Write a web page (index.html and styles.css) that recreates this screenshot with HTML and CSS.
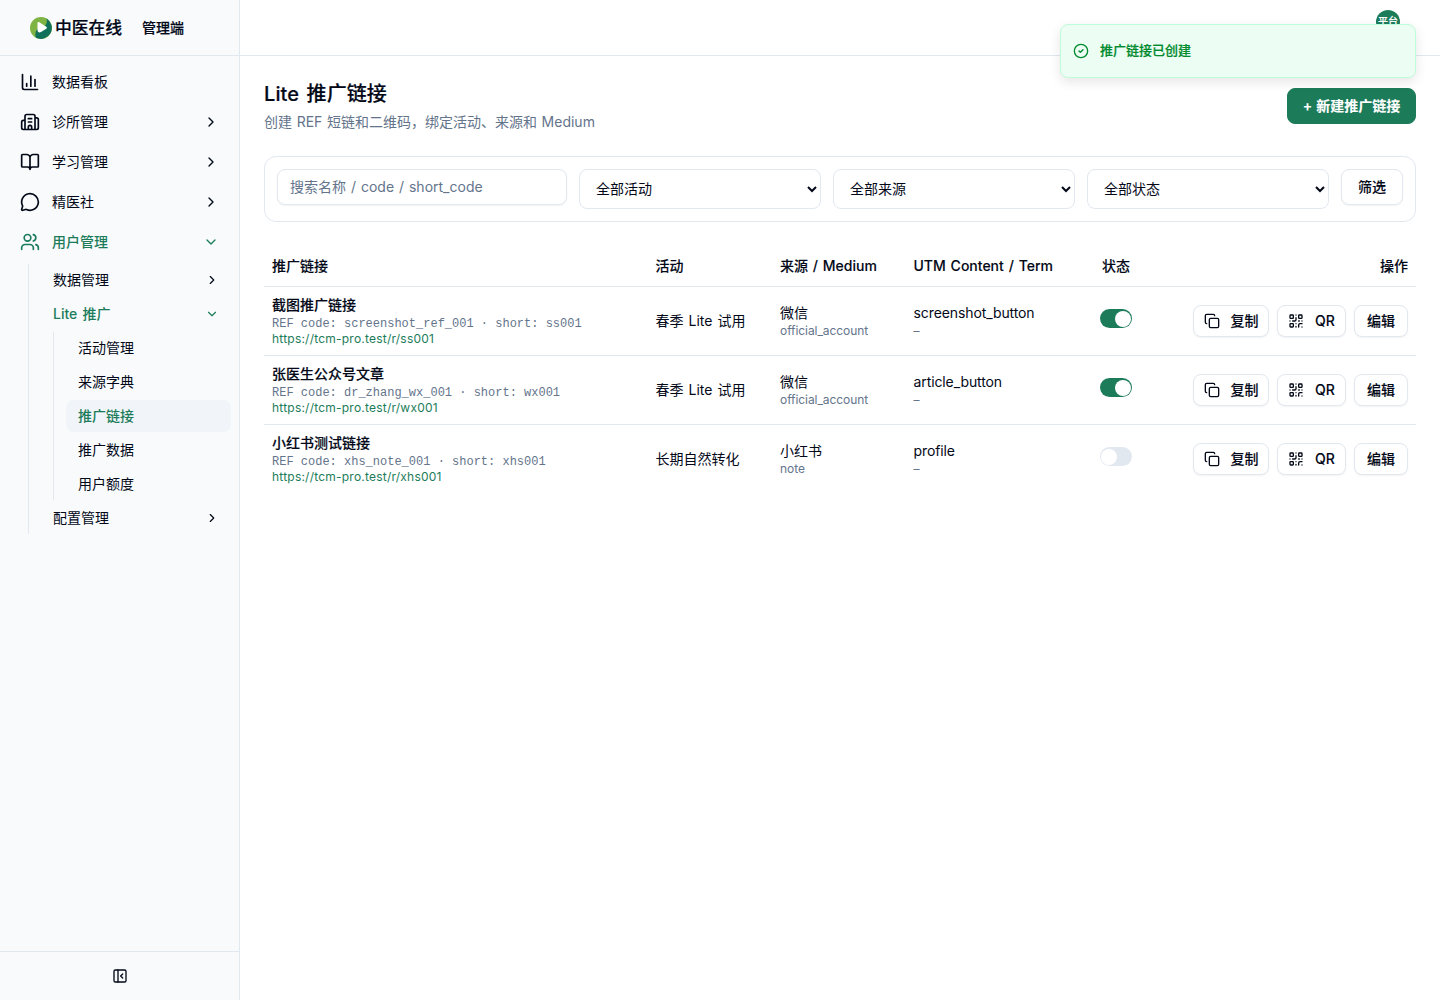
FILE: index.html
```html
<!DOCTYPE html>
<html lang="zh-CN">
<head>
<meta charset="utf-8">
<title>Lite 推广链接</title>
<link rel="stylesheet" href="styles.css">
</head>
<body>
<svg class="sprite" aria-hidden="true">
  <symbol id="chart" viewBox="0 0 24 24"><path d="M3 3v16a2 2 0 0 0 2 2h16M18 17V9M13 17V5M8 17v-3"/></symbol>
  <symbol id="building" viewBox="0 0 24 24"><path d="M10 12h4M10 8h4M14 21v-3a2 2 0 0 0-4 0v3M6 10H4a2 2 0 0 0-2 2v7a2 2 0 0 0 2 2h16a2 2 0 0 0 2-2V9a2 2 0 0 0-2-2h-2M6 21V5a2 2 0 0 1 2-2h8a2 2 0 0 1 2 2v16"/></symbol>
  <symbol id="book" viewBox="0 0 24 24"><path d="M12 7v14M3 18a1 1 0 0 1-1-1V4a1 1 0 0 1 1-1h5a4 4 0 0 1 4 4 4 4 0 0 1 4-4h5a1 1 0 0 1 1 1v13a1 1 0 0 1-1 1h-6a3 3 0 0 0-3 3 3 3 0 0 0-3-3z"/></symbol>
  <symbol id="message" viewBox="0 0 24 24"><path d="M2.992 16.342a2 2 0 0 1 .094 1.167l-1.065 3.29a1 1 0 0 0 1.236 1.168l3.413-.998a2 2 0 0 1 1.099.092 10 10 0 1 0-4.777-4.719"/></symbol>
  <symbol id="users" viewBox="0 0 24 24"><path d="M16 21v-2a4 4 0 0 0-4-4H6a4 4 0 0 0-4 4v2M16 3.128a4 4 0 0 1 0 7.744M22 21v-2a4 4 0 0 0-3-3.87"/><circle cx="9" cy="7" r="4"/></symbol>
  <symbol id="right" viewBox="0 0 24 24"><path d="m9 18 6-6-6-6"/></symbol>
  <symbol id="down" viewBox="0 0 24 24"><path d="m6 9 6 6 6-6"/></symbol>
  <symbol id="copy" viewBox="0 0 24 24"><rect width="14" height="14" x="8" y="8" rx="2"/><path d="M4 16c-1.1 0-2-.9-2-2V4c0-1.1.9-2 2-2h10c1.1 0 2 .9 2 2"/></symbol>
  <symbol id="qr" viewBox="0 0 24 24"><rect width="5" height="5" x="3" y="3" rx="1"/><rect width="5" height="5" x="16" y="3" rx="1"/><rect width="5" height="5" x="3" y="16" rx="1"/><path d="M21 16h-3a2 2 0 0 0-2 2v3M21 21v.01M12 7v3a2 2 0 0 1-2 2H7M3 12h.01M12 3h.01M12 16v.01M16 12h1M21 12v.01M12 21v-1"/></symbol>
  <symbol id="panel" viewBox="0 0 24 24"><rect width="18" height="18" x="3" y="3" rx="2"/><path d="M9 3v18M16 15l-3-3 3-3"/></symbol>
  <symbol id="check" viewBox="0 0 24 24"><circle cx="12" cy="12" r="10"/><path d="m9 12 2 2 4-4"/></symbol>
</svg>
<div class="app">
  <aside class="sidebar">
    <div class="brand">
      <svg class="logo" viewBox="0 0 22 22"><circle cx="11" cy="11" r="11" fill="#7fb343"/><path d="M16.500 1.500A11 11 0 0 1 6 20.800C5 18.500 5.200 15 7 12.500L14.800 9C17 7 17.200 4 16.500 1.500z" fill="#11705a"/><path d="M7.500 6.200c0-1 .9-1.500 1.800-1l7 4.500c.8.5.8 1.500 0 2l-5.300 3.400c-2 1.200-3.500 0-3.500-2z" fill="#fff"/></svg>
      <span class="brand-name">中医在线</span>
      <span class="brand-role">管理端</span>
    </div>
    <nav class="nav">
      <a class="item"><svg class="icon"><use href="#chart"/></svg><span>数据看板</span></a>
      <a class="item"><svg class="icon"><use href="#building"/></svg><span>诊所管理</span><svg class="chev"><use href="#right"/></svg></a>
      <a class="item"><svg class="icon"><use href="#book"/></svg><span>学习管理</span><svg class="chev"><use href="#right"/></svg></a>
      <a class="item"><svg class="icon"><use href="#message"/></svg><span>精医社</span><svg class="chev"><use href="#right"/></svg></a>
      <a class="item open"><svg class="icon"><use href="#users"/></svg><span>用户管理</span><svg class="chev"><use href="#down"/></svg></a>
      <div class="sub">
        <a class="subitem"><span>数据管理</span><svg class="chev"><use href="#right"/></svg></a>
        <a class="subitem open"><span>Lite 推广</span><svg class="chev"><use href="#down"/></svg></a>
        <div class="leafs">
          <a class="leaf">活动管理</a>
          <a class="leaf">来源字典</a>
          <a class="leaf active">推广链接</a>
          <a class="leaf">推广数据</a>
          <a class="leaf">用户额度</a>
        </div>
        <a class="subitem"><span>配置管理</span><svg class="chev"><use href="#right"/></svg></a>
      </div>
    </nav>
    <div class="collapse"><svg class="icon-sm"><use href="#panel"/></svg></div>
  </aside>
  <div class="page">
    <header class="topbar"><span class="avatar">平台</span></header>
    <main class="content">
      <div class="heading">
        <div>
          <h1>Lite 推广链接</h1>
          <p class="lede">创建 REF 短链和二维码，绑定活动、来源和 Medium</p>
        </div>
        <button class="btn primary">+ 新建推广链接</button>
      </div>
      <form class="filters">
        <input class="search" type="text" placeholder="搜索名称 / code / short_code">
        <select class="select"><option>全部活动</option></select>
        <select class="select"><option>全部来源</option></select>
        <select class="select"><option>全部状态</option></select>
        <button class="btn filter" type="button">筛选</button>
      </form>
      <table class="table">
        <colgroup><col class="c-link"><col class="c-act"><col class="c-src"><col class="c-utm"><col class="c-state"><col></colgroup>
        <thead>
          <tr><th>推广链接</th><th>活动</th><th class="spaced">来源 / Medium</th><th class="spaced">UTM Content / Term</th><th class="center">状态</th><th class="right">操作</th></tr>
        </thead>
        <tbody>
          <tr>
            <td><div class="name">截图推广链接</div><div class="code">REF code: screenshot_ref_001 · short: ss001</div><div class="url">https://tcm-pro.test/r/ss001</div></td>
            <td class="spaced">春季 Lite 试用</td>
            <td><div>微信</div><div class="minor">official_account</div></td>
            <td><div class="utm">screenshot_button</div><div class="minor">–</div></td>
            <td class="center"><span class="switch on"></span></td>
            <td><div class="actions"><button class="btn small"><svg class="icon-sm"><use href="#copy"/></svg>复制</button><button class="btn small"><svg class="icon-sm"><use href="#qr"/></svg>QR</button><button class="btn small">编辑</button></div></td>
          </tr>
          <tr>
            <td><div class="name">张医生公众号文章</div><div class="code">REF code: dr_zhang_wx_001 · short: wx001</div><div class="url">https://tcm-pro.test/r/wx001</div></td>
            <td class="spaced">春季 Lite 试用</td>
            <td><div>微信</div><div class="minor">official_account</div></td>
            <td><div class="utm">article_button</div><div class="minor">–</div></td>
            <td class="center"><span class="switch on"></span></td>
            <td><div class="actions"><button class="btn small"><svg class="icon-sm"><use href="#copy"/></svg>复制</button><button class="btn small"><svg class="icon-sm"><use href="#qr"/></svg>QR</button><button class="btn small">编辑</button></div></td>
          </tr>
          <tr>
            <td><div class="name">小红书测试链接</div><div class="code">REF code: xhs_note_001 · short: xhs001</div><div class="url">https://tcm-pro.test/r/xhs001</div></td>
            <td class="spaced">长期自然转化</td>
            <td><div>小红书</div><div class="minor">note</div></td>
            <td><div class="utm">profile</div><div class="minor">–</div></td>
            <td class="center"><span class="switch"></span></td>
            <td><div class="actions"><button class="btn small"><svg class="icon-sm"><use href="#copy"/></svg>复制</button><button class="btn small"><svg class="icon-sm"><use href="#qr"/></svg>QR</button><button class="btn small">编辑</button></div></td>
          </tr>
        </tbody>
      </table>
    </main>
  </div>
</div>
<div class="toast"><svg class="icon-sm"><use href="#check"/></svg><span>推广链接已创建</span></div>
</body>
</html>
```
FILE: styles.css
```css
* { box-sizing: border-box; }
body {
  margin: 0;
  font: 14px/20px Inter, "Noto Sans CJK SC", sans-serif;
  color: #020817;
  background: #fff;
}
.sprite { position: absolute; width: 0; height: 0; }
svg { flex: none; fill: none; stroke: currentColor; stroke-width: 2; stroke-linecap: round; stroke-linejoin: round; }
button, input, select { font: inherit; color: inherit; }

.app { display: flex; height: 1000px; overflow: hidden; }
.sidebar { display: flex; flex-direction: column; width: 240px; flex: none; background: #f8fafc; border-right: 1px solid #e2e8f0; }
.brand { display: flex; align-items: center; height: 56px; padding-left: 30px; border-bottom: 1px solid #e2e8f0; }
.logo { width: 22px; height: 22px; stroke: none; }
.brand-name { margin-left: 3px; font-size: 16.8px; font-weight: 500; width: 87px; white-space: nowrap; -webkit-text-stroke: .2px currentColor; }
.brand-role { font-weight: 500; -webkit-text-stroke: .2px currentColor; }
.nav { flex: 1; padding: 8px 8px 0; }
.item { display: flex; align-items: center; gap: 12px; height: 36px; margin-bottom: 4px; padding: 0 12px; }
.icon { width: 20px; height: 20px; }
.chev { width: 16px; height: 16px; margin-left: auto; }
.open { color: #1c7c5a; font-weight: 500; word-spacing: 1.5px; }
.sub { margin: 0 0 0 20px; border-left: 1px solid #e2e8f0; padding-left: 12px; display: flex; flex-direction: column; gap: 2px; }
.subitem { display: flex; align-items: center; height: 32px; padding: 0 12px; }
.subitem .chev { width: 14px; height: 14px; }
.leafs { margin-left: 12px; padding-left: 12px; border-left: 1px solid #e2e8f0; display: flex; flex-direction: column; gap: 2px; }
.leaf { height: 32px; line-height: 32px; padding: 0 12px; border-radius: 8px; }
.leaf.active { background: #f1f5f9; color: #1c7c5a; font-weight: 500; }
.collapse { display: flex; align-items: center; justify-content: center; height: 49px; border-top: 1px solid #e2e8f0; }
.icon-sm { width: 16px; height: 16px; }

.page { flex: 1; min-width: 0; }
.topbar { display: flex; justify-content: flex-end; height: 56px; padding: 10px 40px 0 0; border-bottom: 1px solid #e2e8f0; }
.avatar { width: 24px; height: 24px; border-radius: 50%; background: #1c7c5a; color: #fff; font-size: 10px; line-height: 23px; text-align: center; font-weight: 500; -webkit-text-stroke: .2px currentColor; }
.content { padding: 24px; }
.heading { display: flex; justify-content: space-between; align-items: center; height: 52px; margin-bottom: 24px; }
h1 { margin: 0 0 4px; font-size: 20px; line-height: 28px; font-weight: 500; word-spacing: 2px; letter-spacing: .1px; -webkit-text-stroke: .2px currentColor; }
.lede { margin: 0; color: #64748b; word-spacing: .7px; }
.btn { display: inline-flex; align-items: center; justify-content: center; height: 36px; padding: 0 16px; background: #fff; border: 1px solid #e2e8f0; border-radius: 8px; font-weight: 500; white-space: nowrap; box-shadow: 0 1px 2px rgba(0,0,0,.05); -webkit-text-stroke: .1px currentColor; }
.primary { width: 129px; background: #1c7c5a; border-color: #1c7c5a; color: #fff; font-weight: 600; box-shadow: none; word-spacing: .5px; }
.filters { display: grid; grid-template-columns: 290px 242px 242px 242px 62px; gap: 12px; align-items: start; height: 66px; padding: 12px; border: 1px solid #e2e8f0; border-radius: 12px; }
.search { width: 100%; height: 36px; padding: 0 12px 2px; border: 1px solid #e2e8f0; border-radius: 8px; background: #fff; box-shadow: 0 1px 2px rgba(0,0,0,.05); word-spacing: 1px; }
.search::placeholder { color: #64748b; }
.select { width: 100%; height: 40px; padding: 0 0 2px 12px; border: 1px solid #e2e8f0; border-radius: 8px; background: #fff; }
.filter { padding: 0; }

.table { width: 100%; margin-top: 24px; table-layout: fixed; border-collapse: separate; border-spacing: 0; }
.c-link { width: 383.5px; }
.c-act { width: 124.5px; }
.c-src { width: 133.5px; }
.c-utm { width: 155.5px; }
.c-state { width: 110px; }
th { height: 41px; padding: 0 8px; text-align: left; font-weight: 500; border-bottom: 1px solid #e2e8f0; white-space: nowrap; -webkit-text-stroke: .1px currentColor; }
td { height: 69px; padding: 8px; vertical-align: middle; border-bottom: 1px solid #e2e8f0; white-space: nowrap; }
tbody tr:last-child td { border-bottom: 0; height: 68px; }
.center { text-align: center; }
.right { text-align: right; }
.spaced { word-spacing: 1.1px; }
.name { font-weight: 500; -webkit-text-stroke: .15px currentColor; }
.code { padding-top: 2px; font: 12px/14px "Liberation Mono", monospace; color: #64748b; }
.url { font-size: 12px; line-height: 16px; color: #1c7c5a; letter-spacing: .22px; }
.utm { letter-spacing: -.1px; }
.minor { font-size: 12px; line-height: 16px; color: #64748b; letter-spacing: -.06px; }
.switch { display: inline-flex; align-items: center; width: 32px; height: 18.4px; padding: 1px; border-radius: 10px; background: #e2e8f0; vertical-align: 1px; }
.switch::before { content: ""; width: 16px; height: 16px; border-radius: 50%; background: #fff; }
.switch.on { background: #1c7c5a; justify-content: flex-end; }
.actions { display: flex; justify-content: flex-end; gap: 8px; }
.small { height: 32px; padding: 0; gap: 11px; }
.small:nth-child(1) { width: 76px; }
.small:nth-child(2) { width: 69px; }
.small:nth-child(3) { width: 54px; }

.toast { position: absolute; top: 24px; right: 24px; display: flex; align-items: center; gap: 11px; width: 356px; height: 54px; padding: 0 12px; border: 1px solid #bffcd9; border-radius: 8px; background: #ecfdf3; color: #008a2e; font-size: 13px; font-weight: 500; box-shadow: 0 4px 12px rgba(0,0,0,.1); }
.toast span { margin-top: -2px; -webkit-text-stroke: .2px currentColor; }
```
